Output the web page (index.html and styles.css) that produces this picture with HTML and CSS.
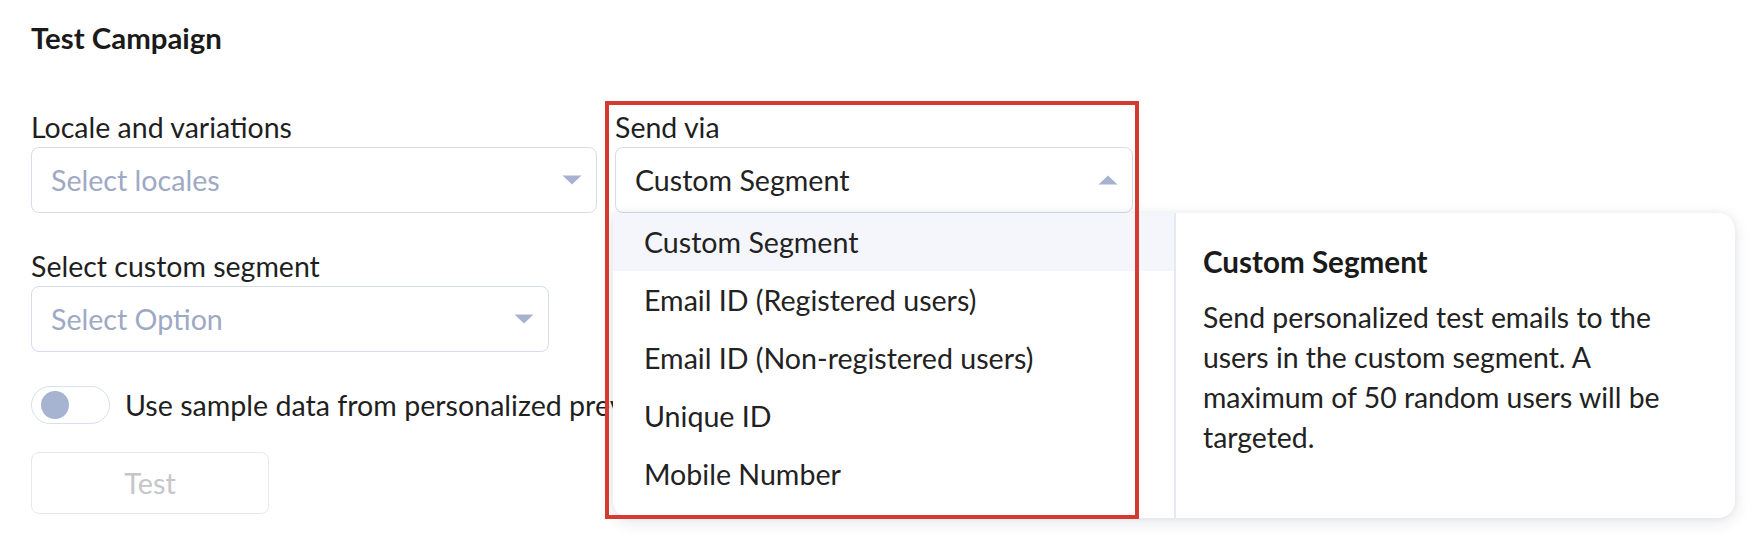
FILE: index.html
```html
<!DOCTYPE html>
<html>
<head>
<meta charset="utf-8">
<link rel="stylesheet" href="styles.css">
</head>
<body>
<div class="page">
  <h1 class="title">Test Campaign</h1>
  <div class="row-top">
    <div class="field field-locale">
      <div class="label">Locale and variations</div>
      <div class="select">
        <span class="placeholder">Select locales</span>
        <svg class="caret" width="20" height="10" viewBox="0 0 20 10"><path d="M0.5 0.5H19.5L10 9.5Z"/></svg>
      </div>
    </div>
    <div class="field field-send">
      <div class="label">Send via</div>
      <div class="select select-open">
        <span class="value">Custom Segment</span>
        <svg class="caret" width="20" height="10" viewBox="0 0 20 10"><path d="M0.5 9.5H19.5L10 0.5Z"/></svg>
        <div class="dropdown">
          <ul class="options">
            <li class="option active">Custom Segment</li>
            <li class="option">Email ID (Registered users)</li>
            <li class="option">Email ID (Non-registered users)</li>
            <li class="option">Unique ID</li>
            <li class="option">Mobile Number</li>
          </ul>
          <div class="info">
            <div class="info-title">Custom Segment</div>
            <p class="info-text">Send personalized test emails to the users in the custom segment. A maximum of 50 random users will be targeted.</p>
          </div>
        </div>
      </div>
    </div>
  </div>
  <div class="field field-segment">
    <div class="label">Select custom segment</div>
    <div class="select">
      <span class="placeholder">Select Option</span>
      <svg class="caret" width="20" height="10" viewBox="0 0 20 10"><path d="M0.5 0.5H19.5L10 9.5Z"/></svg>
    </div>
  </div>
  <div class="toggle-row">
    <span class="toggle"><span class="knob"></span></span>
    <span class="toggle-label">Use sample data from personalized preview</span>
  </div>
  <button class="btn" disabled>Test</button>
  <div class="annotation"></div>
</div>
</body>
</html>
```

FILE: styles.css
```css
* { box-sizing: border-box; }
html, body { margin: 0; padding: 0; background: #ffffff; }
body {
  font-family: "Lato", "Liberation Sans", sans-serif;
  color: #1e1e1e;
  width: 1764px;
  height: 540px;
  overflow: hidden;
}
.page {
  position: relative;
  padding: 26px 0 0 31px;
}
.title {
  margin: 0;
  font-size: 29.4px;
  line-height: 24px;
  font-weight: 700;
  color: #1a1a1a;
}
.row-top {
  display: flex;
  gap: 18px;
  margin-top: 64px;
}
.field-locale { width: 566px; }
.field-send { width: 518px; }
.field-segment { width: 518px; margin-top: 40px; }
.label {
  font-size: 28.5px;
  line-height: 26px;
  color: #1f1f1f;
  margin-bottom: 7px;
}
.select {
  position: relative;
  height: 66px;
  border: 1.5px solid #d6dcec;
  border-radius: 8px;
  display: flex;
  align-items: center;
  justify-content: space-between;
  padding: 0 14px 0 19px;
  font-size: 28.6px;
  background: #fff;
}
.placeholder { color: #9ea9c4; }
.value { color: #222; }
.caret { fill: #a6b2cf; display: block; }
.dropdown {
  position: absolute;
  top: 65px;
  left: -3px;
  width: 1122px;
  height: 305px;
  display: flex;
  background: #fff;
  border-radius: 0 17px 17px 17px;
  box-shadow: 0 4px 16px rgba(30, 40, 70, 0.12), 0 0 6px rgba(30, 40, 70, 0.05);
  z-index: 5;
  overflow: hidden;
}
.options {
  list-style: none;
  margin: 0;
  padding: 0;
  width: 563px;
  border-right: 2px solid #e5e9f2;
}
.option {
  height: 58px;
  display: flex;
  align-items: center;
  padding-left: 31px;
  font-size: 28.6px;
  color: #222;
}
.option.active { background: #f4f6fc; }
.info {
  flex: 1;
  padding: 33px 0 0 27px;
}
.info-title {
  font-size: 29.6px;
  line-height: 32px;
  font-weight: 700;
  color: #1a1a1a;
}
.info-text {
  margin: 19px 0 0 0;
  width: 460px;
  font-size: 28.4px;
  line-height: 40px;
  color: #222;
}
.toggle-row {
  display: flex;
  align-items: center;
  gap: 15px;
  margin-top: 34px;
}
.toggle {
  width: 79px;
  height: 38px;
  border: 1.5px solid #d9dfee;
  border-radius: 19px;
  display: flex;
  align-items: center;
  padding-left: 8.5px;
  flex: none;
}
.knob {
  width: 28px;
  height: 28px;
  border-radius: 50%;
  background: #a6b3d1;
}
.toggle-label {
  font-size: 28.6px;
  color: #1f1f1f;
  white-space: nowrap;
}
.btn {
  display: block;
  margin-top: 28px;
  width: 238px;
  height: 62px;
  border: 1.5px solid #e8e9ee;
  border-radius: 8px;
  background: #fff;
  font-family: inherit;
  font-size: 28.8px;
  color: #c6c6ca;
}
.annotation {
  position: absolute;
  left: 605px;
  top: 101px;
  width: 534px;
  height: 418px;
  border: 4.5px solid #d43a2f;
  z-index: 10;
  pointer-events: none;
}
```
